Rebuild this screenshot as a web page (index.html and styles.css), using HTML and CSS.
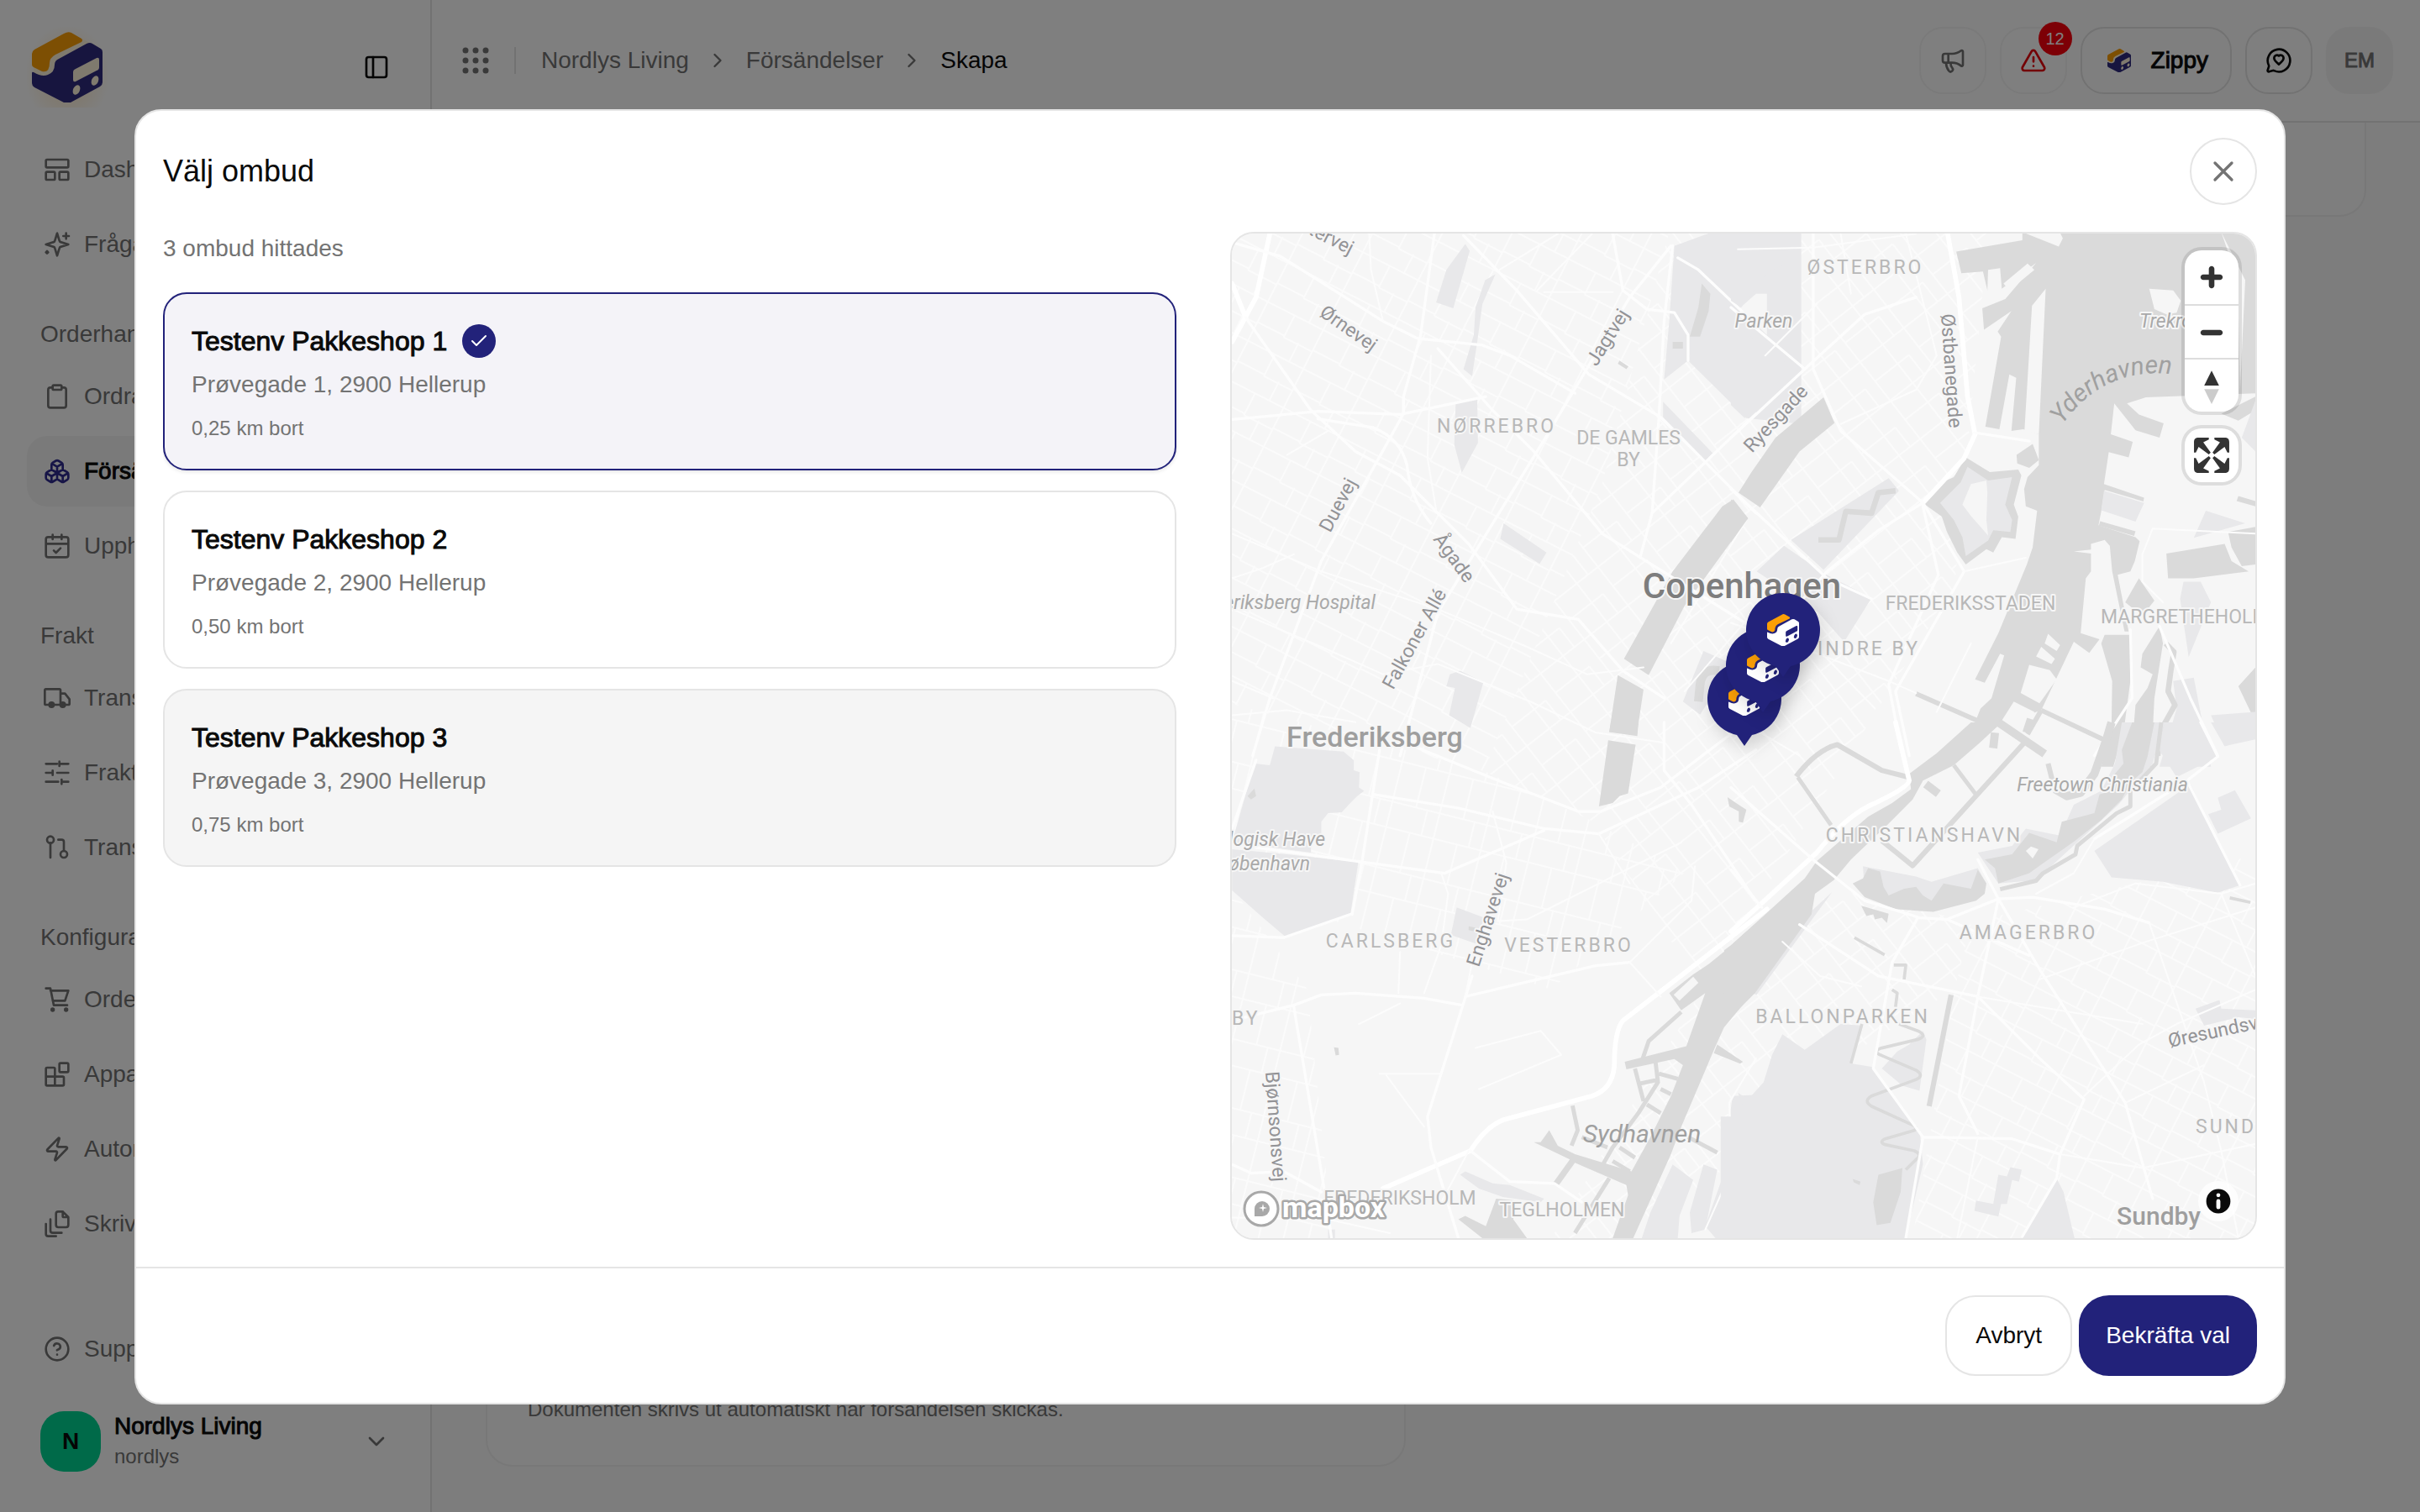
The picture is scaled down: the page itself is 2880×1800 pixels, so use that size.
FILE: index.html
```html
<!DOCTYPE html>
<html lang="sv">
<head>
<meta charset="utf-8">
<meta name="viewport" content="width=device-width, initial-scale=1">
<title>Skapa försändelse – Nordlys Living</title>
<link rel="stylesheet" href="styles.css">
</head>
<body>
<svg class="defs" aria-hidden="true">
  <symbol id="cube" viewBox="0 0 84 84">
    <path class="cube-gap" d="M2 22 40 2q4-2 8 0L82 20v44L46 82q-4 2-8 0L2 64z"/>
    <path class="cube-top" d="M0 26q0-3 3-5L38 2q5-3 9-1l12 7q2 2 0 4L28 27q-7 4-7 10 0 12-9 10L2 42q-2-1-2-3z"/>
    <path class="cube-body" d="M0 49q0-2 2-1 10 6 17 3 8-3 8-12 0-5 5-7L65 14q4-2 7 0l10 6q2 1 2 4v36q0 3-3 5L46 84q-4 2-8 0L3 66q-3-2-3-5z"/>
    <path class="cube-gap" d="M49 48q0-3 3-4l25-13q3-1 3 2v9q0 3-3 4L52 59q-3 1-3-2z"/>
    <ellipse class="cube-gap" cx="53" cy="69" rx="4" ry="6" transform="rotate(25 53 69)"/>
    <ellipse class="cube-gap" cx="75" cy="58" rx="4" ry="6" transform="rotate(25 75 58)"/>
  </symbol>
  <symbol id="chevron" viewBox="0 0 24 24"><path d="m9 18 6-6-6-6"/></symbol>
</svg>

<div class="app">
  <aside class="sidebar">
    <div class="brand">
      <a class="brand-mark" href="#" aria-label="Start"><svg class="cube"><use href="#cube"/></svg></a>
      <button class="plain" type="button" aria-label="Fäll ihop menyn">
        <svg class="icon" viewBox="0 0 24 24"><rect x="3" y="3" width="18" height="18" rx="2"/><path d="M9 3v18"/></svg>
      </button>
    </div>
    <nav class="nav">
      <ul class="nav-list">
        <li><a class="nav-item" href="#"><svg class="icon" viewBox="0 0 24 24"><rect x="2" y="3" width="20" height="7" rx="1"/><rect x="2" y="14" width="8" height="7" rx="1"/><rect x="14" y="14" width="8" height="7" rx="1"/></svg>Dashboard</a></li>
        <li><a class="nav-item" href="#"><svg class="icon" viewBox="0 0 24 24"><path d="m12 2-2 6.500a2 2 0 0 1-1.500 1.500L2 12l6.500 2a2 2 0 0 1 1.500 1.500L12 22l2-6.500a2 2 0 0 1 1.500-1.500L22 12l-6.500-2a2 2 0 0 1-1.500-1.500zM20 2v5M22.500 4.500h-5M3 18l1 1-1 1-1-1z"/></svg>Fråga Zippy</a></li>
      </ul>
      <h2 class="nav-label">Orderhantering</h2>
      <ul class="nav-list">
        <li><a class="nav-item" href="#"><svg class="icon" viewBox="0 0 24 24"><rect x="8" y="2" width="8" height="4" rx="1"/><path d="M16 4h2a2 2 0 0 1 2 2v14a2 2 0 0 1-2 2H6a2 2 0 0 1-2-2V6a2 2 0 0 1 2-2h2"/></svg>Ordrar</a></li>
        <li><a class="nav-item active" href="#"><svg class="icon" viewBox="0 0 24 24"><path d="M2.970 12.920A2 2 0 0 0 2 14.630v3.240a2 2 0 0 0 .97 1.710l3 1.800a2 2 0 0 0 2.060 0L12 19v-5.500l-5-3zM7 16.500l-4.740-2.850M7 16.500l5-3M7 16.500v5.170M12 13.500V19l3.970 2.380a2 2 0 0 0 2.060 0l3-1.800a2 2 0 0 0 .97-1.710v-3.240a2 2 0 0 0-.97-1.710L17 10.500zM17 16.500l-5-3M17 16.500l4.740-2.850M17 16.500v5.170M7.970 4.420A2 2 0 0 0 7 6.130v4.370l5 3 5-3V6.130a2 2 0 0 0-.97-1.710l-3-1.800a2 2 0 0 0-2.060 0zM12 8 7.260 5.150M12 8l4.740-2.850M12 13.500V8"/></svg>Försändelser</a></li>
        <li><a class="nav-item" href="#"><svg class="icon" viewBox="0 0 24 24"><path d="M8 2v4M16 2v4M3 10h18M9 16l2 2 4-4"/><rect x="2" y="4" width="20" height="18" rx="2"/></svg>Upphämtningar</a></li>
      </ul>
      <h2 class="nav-label">Frakt</h2>
      <ul class="nav-list">
        <li><a class="nav-item" href="#"><svg class="icon" viewBox="0 0 24 24"><path d="M15 18V5a1 1 0 0 0-1-1H2a1 1 0 0 0-1 1v12a1 1 0 0 0 1 1h2M9 18h6M19 18h3a1 1 0 0 0 1-1v-4l-4-5h-4"/><circle class="solid" cx="7" cy="18" r="2"/><circle class="solid" cx="17" cy="18" r="2"/></svg>Transportörer</a></li>
        <li><a class="nav-item" href="#"><svg class="icon" viewBox="0 0 24 24"><path d="M2 4h10M14 4h8M14 2v4M2 12h6M12 12h10M8 10v4M2 20h11M16 20h6M16 18v4"/></svg>Fraktregler</a></li>
        <li><a class="nav-item" href="#"><svg class="icon" viewBox="0 0 24 24"><circle cx="6" cy="5" r="3"/><circle cx="18" cy="18" r="3"/><path d="M6 8v13M13 5h3a2 2 0 0 1 2 2v8"/></svg>Transportavtal</a></li>
      </ul>
      <h2 class="nav-label">Konfiguration</h2>
      <ul class="nav-list">
        <li><a class="nav-item" href="#"><svg class="icon" viewBox="0 0 24 24"><path d="M2 2h4l3 15h12M6 4h16l-3 9H8"/><circle class="solid" cx="8" cy="21" r="1"/><circle class="solid" cx="20" cy="21" r="1"/></svg>Orderkällor</a></li>
        <li><a class="nav-item" href="#"><svg class="icon" viewBox="0 0 24 24"><rect x="14" y="2" width="8" height="8" rx="1"/><path d="M10 22V7a1 1 0 0 0-1-1H3a1 1 0 0 0-1 1v14a1 1 0 0 0 1 1h14a1 1 0 0 0 1-1v-6a1 1 0 0 0-1-1H2"/></svg>Appar</a></li>
        <li><a class="nav-item" href="#"><svg class="icon" viewBox="0 0 24 24"><path d="M4 14a1 1 0 0 1-.78-1.630l9.900-10.200a.5.5 0 0 1 .86.460l-1.920 6.020A1 1 0 0 0 13 10h7a1 1 0 0 1 .78 1.630l-9.900 10.200a.5.5 0 0 1-.86-.460l1.920-6.020A1 1 0 0 0 11 14z"/></svg>Automation</a></li>
        <li><a class="nav-item" href="#"><svg class="icon" viewBox="0 0 24 24"><path d="M17 1h-4a2 2 0 0 0-2 2v10a2 2 0 0 0 2 2h7a2 2 0 0 0 2-2V6zM17 1v4a1 1 0 0 0 1 1h4M6 8v10a2 2 0 0 0 2 2h8M2 12v9a2 2 0 0 0 2 2h7"/></svg>Skrivare</a></li>
      </ul>
    </nav>
    <div class="sidebar-foot">
      <a class="nav-item" href="#"><svg class="icon" viewBox="0 0 24 24"><circle cx="12" cy="12" r="10"/><path d="M9.100 9a3 3 0 0 1 5.800 1c0 2-3 3-3 3M12 17h.01"/></svg>Support</a>
      <button class="account plain" type="button">
        <span class="avatar">N</span>
        <span class="account-text"><span class="account-name">Nordlys Living</span><span class="account-slug">nordlys</span></span>
        <svg class="icon" viewBox="0 0 24 24"><path d="m6 9 6 6 6-6"/></svg>
      </button>
    </div>
  </aside>

  <div class="page">
    <header class="topbar">
      <button class="plain apps" type="button" aria-label="Appväljare">
        <svg class="dots" viewBox="0 0 36 36"><circle cx="6" cy="6" r="3.500"/><circle cx="18" cy="6" r="3.500"/><circle cx="30" cy="6" r="3.500"/><circle cx="6" cy="18" r="3.500"/><circle cx="18" cy="18" r="3.500"/><circle cx="30" cy="18" r="3.500"/><circle cx="6" cy="30" r="3.500"/><circle cx="18" cy="30" r="3.500"/><circle cx="30" cy="30" r="3.500"/></svg>
      </button>
      <nav class="crumbs" aria-label="Brödsmulor">
        <a href="#">Nordlys Living</a>
        <svg class="sep"><use href="#chevron"/></svg>
        <a href="#">Försändelser</a>
        <svg class="sep"><use href="#chevron"/></svg>
        <span class="current">Skapa</span>
      </nav>
      <div class="actions">
        <button class="tool faint" type="button" aria-label="Nyheter"><svg class="icon" viewBox="0 0 24 24"><path d="M11 6a13 13 0 0 0 8.400-2.800A1 1 0 0 1 21 4v12a1 1 0 0 1-1.600.8A13 13 0 0 0 11 14H5a2 2 0 0 1-2-2V8a2 2 0 0 1 2-2zM6 14a12 12 0 0 0 2.400 7.200 2 2 0 0 0 3.200-2.400A8 8 0 0 1 10 14M8 6v8"/></svg></button>
        <button class="tool faint alert" type="button" aria-label="12 varningar"><svg class="icon" viewBox="0 0 24 24"><path d="m21.700 18-8-14a2 2 0 0 0-3.500 0l-8 14A2 2 0 0 0 4 21h16a2 2 0 0 0 1.700-3M12 9v4M12 17h.01"/></svg><span class="badge">12</span></button>
        <button class="tool wide" type="button"><svg class="cube small"><use href="#cube"/></svg>Zippy</button>
        <button class="tool" type="button" aria-label="Feedback"><svg class="icon" viewBox="0 0 24 24"><path d="M3 16.300A2 2 0 0 1 3.100 17.400L2 20.800a1 1 0 0 0 1.200 1.200l3.500-1a2 2 0 0 1 1.100.1A10 10 0 1 0 3 16.300zM7.800 9.900a2.500 2.500 0 0 1 4.200-2 2.500 2.500 0 0 1 4.200 2c0 2.500-2.500 3.600-4.200 5.600-1.700-2-4.200-3.100-4.200-5.600z"/></svg></button>
        <button class="tool user" type="button">EM</button>
      </div>
    </header>
    <main class="content">
      <section class="sheet"><p>Dokumenten skrivs ut automatiskt när försändelsen skickas.</p></section>
      <section class="sheet short"></section>
    </main>
  </div>
</div>

<div class="overlay">
  <section class="dialog" role="dialog" aria-modal="true" aria-labelledby="dialog-title">
    <header class="dialog-head">
      <h1 id="dialog-title">Välj ombud</h1>
      <button class="close" type="button" aria-label="Stäng"><svg class="icon" viewBox="0 0 24 24"><path d="M18 6 6 18M6 6l12 12"/></svg></button>
    </header>
    <div class="dialog-body">
      <div class="results">
        <p class="count">3 ombud hittades</p>
        <div class="shops">
          <button class="shop selected" type="button" aria-pressed="true">
            <span class="shop-name">Testenv Pakkeshop 1<span class="tick"><svg viewBox="0 0 24 24"><path d="M20 6 9 17l-5-5"/></svg></span></span>
            <span class="shop-address">Prøvegade 1, 2900 Hellerup</span>
            <span class="shop-distance">0,25 km bort</span>
          </button>
          <button class="shop" type="button" aria-pressed="false">
            <span class="shop-name">Testenv Pakkeshop 2</span>
            <span class="shop-address">Prøvegade 2, 2900 Hellerup</span>
            <span class="shop-distance">0,50 km bort</span>
          </button>
          <button class="shop hovered" type="button" aria-pressed="false">
            <span class="shop-name">Testenv Pakkeshop 3</span>
            <span class="shop-address">Prøvegade 3, 2900 Hellerup</span>
            <span class="shop-distance">0,75 km bort</span>
          </button>
        </div>
      </div>

      <div class="map">
        <svg class="map-canvas" viewBox="0 0 1218 1196" preserveAspectRatio="xMidYMid slice" role="img" aria-label="Karta över Köpenhamn">
          <defs>
            <pattern id="streets-a" width="74" height="52" patternUnits="userSpaceOnUse" patternTransform="rotate(27)"><path d="M0 1h74M1 0v52M37 0v30M0 28h37M56 28v24M37 30h37"/></pattern>
            <pattern id="streets-b" width="66" height="58" patternUnits="userSpaceOnUse" patternTransform="rotate(-38)"><path d="M0 1h66M1 0v58M33 0v58M33 30h33M18 30v28M0 30h18"/></pattern>
            <pattern id="streets-c" width="58" height="80" patternUnits="userSpaceOnUse" patternTransform="rotate(14)"><path d="M0 1h58M1 0v80M30 1v50M1 50h57M44 50v30"/></pattern>
          </defs>
          <rect class="land" width="1218" height="1196"/>
          <g class="streets">
            <path fill="url(#streets-a)" d="M0 0H520L440 300 300 640 0 560z"/>
            <path fill="url(#streets-b)" d="M520 0H900L860 420 560 900 430 700 300 640 440 300z"/>
            <path fill="url(#streets-c)" d="M0 560 300 640 430 700 540 760 380 900 0 780z"/>
            <path fill="url(#streets-c)" d="M0 780 90 900 120 1196H0z"/>
            <path fill="url(#streets-a)" d="M880 820 1218 740V1196H810L860 900z"/>
            <path fill="url(#streets-b)" d="M560 900 720 780 880 820 860 900 700 1000 500 1196H380z"/>
          </g>

          <!-- north-west -->
          <g transform="translate(-16 -18) scale(.408)">
            <path class="park" d="M720 75 733 95 685 262 635 245 665 150zM778 180 808 163 770 250 755 360 740 460 715 440 745 340 750 260zM692 540 755 528 757 655 710 742 688 660zM832 890 957 975 937 1008 822 935zM705 1320 773 1353 735 1487 673 1450 690 1370 665 1365 675 1330zM1330 80 1440 40H1700V600L1540 583 1370 415 1300 470 1315 300zM1297 535 1442 685 1422 707 1297 580zM1415 1262 1500 1300 1405 1448 1355 1410z"/>
            <path class="land" d="M1568 220 1520 262 1600 340 1600 220z"/>
            <path class="water" d="M1410 190 1435 220 1430 270 1405 345 1375 345 1400 260zM1325 360h30v20h-30zM1170 415 1196 432 1190 440 1165 424zM1502 820 1545 875 1360 1130 1255 1333 1183 1285 1325 1030 1470 840zM1165 1333 1240 1375 1220 1508 1140 1498z"/>
            <path class="water-line" stroke-width="26" d="M1460 1320q-50-10-55 40l-5 50"/>
            <path class="road wide" d="M150 45 110 230 40 360M40 190 80 290"/>
            <path class="road" d="M80 290 270 560 400 680 530 750 640 860 730 950 870 1140 1050 1170 1180 1320 1300 1400M40 587 290 563 530 572 780 520M290 585 450 610Q530 640 550 720 560 820 620 890M40 70 180 110 480 300 580 350 770 370 850 400 1040 510M630 45 590 340 540 520V570L300 1000 150 1400 100 1568M715 50 870 210 1080 455 1290 580 1568 860M640 380 800 560 920 680 1120 920 1280 1020 1568 1200M1320 80 1200 230 960 630 640 1150 530 1568M1150 45 1180 210 1250 265 1330 275 1370 340 1370 415M1325 80 1300 300 1285 580 1265 860 1230 990M1568 570 1265 860M1340 115 1400 150 1568 310"/>
            <path class="road thin" d="M40 920 300 1030 640 1140 900 1250 1075 1330 1240 1310M40 1140 300 1250 480 1330 640 1300 910 1410 1100 1500 1300 1530M440 45 445 150 480 300M620 400 610 700 635 850M40 1050 130 1020 220 980M40 1350 160 1400M40 1450 200 1435 400 1470M200 690 320 620M820 150 990 45M930 210 1090 45M950 215H1150M1568 1140 1360 1380M1540 880 1320 1240"/>
          </g>
          <!-- north-east -->
          <g transform="translate(594 -18) scale(.408)">
            <path class="park" d="M0 40H70L158 135 110 155 30 260 0 240zM0 300 170 430 165 460 120 490 40 583 0 545zM460 758 490 795 270 1025 175 938zM155 955 270 1035 410 1108 330 1235 255 1150 75 1030z"/>
            <path class="water" d="M657 97 850 64V40L956 82 968 58 957 36H1540V510L1210 522 1155 540 1190 572 1262 598 1250 640 1180 618 1118 540 1108 630 1172 652 1160 697 1102 682 1088 775 1205 815 1203 826 1090 792 1080 855 1072 895 1180 930 1192 942 1178 1000 1165 1030 1128 1040 1160 1205H1148L1112 1030 1105 955 1090 938 1050 950V966L1000 972 1050 978V1030L1035 1050 1020 1210 1075 1228 1045 1268 1000 1235 905 1435 790 1475 610 1568H600L700 1500 728 1430 760 1400 797 1275 785 1270 740 1355 712 1345 780 1210 863 1010 880 960 893 853 860 840 855 790 865 755 898 720V630L852 615 818 620 832 465 812 455 783 615 742 608 788 345 778 330 818 270 738 325 733 262 800 235 890 130 790 205 785 145 750 150 748 210 735 155 672 160z"/>
            <path class="land" d="M918 205 898 630 856 620 878 255zM885 150 812 210 795 190 865 132zM1220 205 1290 210 1312 240 1300 275 1270 280 1235 265zM870 1303 930 1318 950 1345 900 1415 845 1385zM825 1410 885 1440 860 1505 790 1465zM925 1212 960 1245 950 1262 915 1240zM905 1250 945 1285 935 1300 890 1278zM1430 40 1500 180 1485 500 1478 180z"/>
            <path class="water" d="M685 697 755 740 838 733 847 750 825 835 838 870 830 935 790 930 765 975 745 965 685 1010 660 975 630 915 615 870 562 832 615 770 650 755zM833 690 880 658 898 705 870 728 835 715zM270 522 302 597 200 680 85 843 22 800 60 740 130 640zM0 820 50 875 0 945zM1270 978 1440 950 1460 1000 1510 1030 1350 1050 1275 1050zM1450 915 1530 900V1010L1490 1015 1460 960zM1190 1050 1235 1115 1200 1160 1150 1120zM1480 1365 1530 1310V1470zM1430 570 1530 520 1530 560 1480 590zM1480 810 1530 825 1530 840 1475 825zM1200 1270 1250 1190 1260 1240 1235 1400 1225 1600H1130L1175 1480 1180 1420 1215 1370 1230 1330 1195 1310zM1090 1215 1165 1215V1350L1145 1500 1115 1600H1080L1110 1480 1112 1350 1080 1240z"/>
            <path class="park" d="M690 725 750 765 820 755 800 835 820 880 815 915 765 910 750 940 685 985 675 930 650 880 610 830 670 770zM1088 795 1205 830 1180 885 1080 852zM1385 853 1500 890 1350 932zM1290 1350 1350 1340 1400 1600H1250L1300 1430zM1320 1060H1370L1400 1120 1335 1280 1310 1110zM1490 640 1530 530V680zM1400 1450 1530 1440V1520L1440 1540z"/>
            <path class="land" d="M700 775 745 765 748 800 745 880 750 925 700 868 675 835z"/>
            <path class="water-line" stroke-width="16" d="M255 938H315L335 855 410 860 430 800 480 795M1268 1240 1292 1265 1283 1320 1275 1380 1295 1420 1250 1500 1245 1568M1165 1240"/>
            <path class="water-line" stroke-width="14" d="M540 1387 730 1470M905 1435 1085 1520M905 1435 865 1505M1075 890 1178 920"/>
            <path class="road wide" d="M632 45 665 230 690 520 712 630 680 700 560 830"/>
            <path class="road" d="M560 830 430 910 280 1030 0 1350M240 45V440L320 620 560 830 680 1030M0 260 210 435M0 640 215 440 390 280 540 230M0 790 280 1050 410 1110M560 840 605 1040 460 1360 500 1568M680 1030 480 1380 520 1568M710 625 870 650M1165 1200 1170 1400 1060 1568M1250 1190 1340 1400 1420 1568"/>
            <path class="road thin" d="M320 600 540 500 600 400M0 1180 200 1250 460 1350 540 1385M1530 920 1230 905 1200 980V1060L1260 1120M320 45 350 220M510 45 600 400M20 90 240 85 540 45M100 400 250 250M680 1030 860 990M180 1180 420 1430M0 1450 200 1568M700 1240 600 1440"/>
          </g>
          <!-- south-west -->
          <g transform="translate(-16 582) scale(.408)">
            <path class="park" d="M165 70 365 85 395 110V140L412 145 410 190 425 200 405 215 380 240 360 262 320 265 300 290V330L270 335V380L40 350 105 120 150 125zM40 370 200 385 408 408 385 560 195 625 130 570 40 490zM695 540 775 570 750 645 678 620zM1500 1090 1600 1085V1505H1450L1420 1470 1480 1300 1500 1310 1490 1160zM1325 1290 1385 1335 1345 1440 1340 1505H1235L1260 1430zM1415 1290 1455 1305 1420 1480 1380 1490 1375 1430zM705 1320 720 1310 800 1345 850 1350 950 1390 940 1400 830 1385 760 1360zM320 1480h20v25h-20z"/>
            <path class="water" d="M85 215 105 193 110 215 95 225zM337 948 350 950 352 970 342 972zM730 595 755 600 750 610 730 606zM1145 0H1225L1222 40 1140 28zM1137 52 1217 65 1195 207 1170 215 1150 235 1110 245zM1485 218 1510 235 1540 255 1530 292 1518 290V260L1490 245zM1600 575 1540 610 1480 665 1430 705 1385 735 1315 790 1350 840 1420 790 1365 945 1185 990 1190 1012 1330 982 1355 1000 1320 1090 1260 1210 1205 1310 1040 1260 990 1235 965 1190 940 1225 920 1225 1025 1275 975 1345 990 1355 1040 1285 1190 1350 1195 1380 1150 1505H1210L1320 1260 1350 1180 1450 945 1475 890 1600 740zM700 1450 720 1440 780 1470 810 1390 870 1395 860 1450 900 1505H770zM1455 940 1530 990 1522 996 1445 965z"/>
            <path class="land" d="M1328 795 1385 742 1400 760 1345 812z"/>
            <path class="water-line" stroke-width="12" d="M1350 845 1255 930 1238 980M1033 1118 1048 1190 1030 1235M1215 1010 1240 1105M1275 990 1282 1050 1225 1140 1150 1240 1110 1310M1225 1055 1285 1042M1290 1070 1320 1085M1250 1115 1290 1140M1170 1240 1215 1270M1150 1280 1200 1310M1140 1330 1040 1490M1370 1210 1455 1255M1060 1210 1135 1240M1285 1025 1340 1040"/>
            <path class="road wide" d="M1600 545 1180 870Q1155 900 1155 1000 1150 1070 1090 1090L830 1160Q780 1180 735 1250L480 1360"/>
            <path class="road" d="M470 80 420 400 390 560M570 70 830 175 1050 260 1115 260 1290 190 1460 60 1568 -20M450 210 700 250 950 310 1110 325 1400 190 1568 80M110 365 660 440 950 315M720 800 1100 710 1200 700M40 622 190 628 385 560M40 870 220 825 300 795 400 790 600 805 710 825M740 740 610 1150 620 1240 700 1505M220 830 310 1370 330 1505M1300 0V140L1380 240 1560 510M110 110 40 310M735 1250 850 1340 980 1345 1060 1400M40 1290 95 1315 190 1310 300 1370"/>
            <path class="road thin" d="M650 440 670 500 650 650 600 790M800 260 840 410 815 580 900 575 1050 500 1350 350M1200 700 1380 520 1390 420M1110 325 1200 470M1200 700 1290 800M40 1445 320 1450 500 1490M1568 980 1490 1110 1500 1300 1420 1480M720 800 740 700M530 670 525 790M410 880 530 820M750 950 940 900 1000 970 760 1070M470 1025H650M490 1030 600 1180M730 1250 650 1400"/>
          </g>
          <!-- south-east -->
          <g transform="translate(594 582) scale(.408)">
            <path class="park" d="M150 910 215 955 320 880 385 885 350 995 410 1005 490 1110 550 1190 560 1290 508 1510H-30V1150H48L20 1080 50 1100 95 1050 120 970zM485 960 520 940 560 900 570 925 550 1075 500 1060 440 1010zM295 495 75 795 60 790 235 550zM1060 375 1340 180 1485 475 1420 497 1260 465 1110 452zM1265 0H1370L1420 100 1300 160 1245 75zM1420 220 1470 198 1517 280 1420 325 1392 268 1430 255zM1400 0H1530V40L1440 70zM850 1505 950 1330 970 1370 1002 1505zM780 1320 805 1325 815 1298 848 1305 840 1340 820 1335 805 1405 788 1405 780 1442 710 1425 715 1395 765 1405zM1355 835 1425 810 1430 835 1530 840V865L1480 860 1380 885zM385 420 540 450 585 465 720 425 745 470 600 540 390 500zM720 380 820 360 860 310 960 330 1000 240 1080 200 1120 120 1140 0H1265L1230 120 1130 240 890 460 780 470z"/>
            <path class="water" d="M-20 665 0 650 100 560 215 455 250 405 400 275 470 235 525 195 520 150 600 90 700 0H790L725 60 650 125 560 170 530 225 455 300 350 400 300 460 245 500 235 560 70 790 -20 880zM355 470 385 455 400 425 435 435 445 480 460 505 505 485 540 480 560 505 585 520 620 470 700 485 720 430 745 470 740 500 715 520 590 553 480 545 390 510zM740 400 820 385 870 322 950 350 965 290 1060 265 1075 210 1110 200 1120 150 1145 120 1140 80 1170 0H1235L1215 100 1200 145 1165 175 1140 225 1080 285 1000 348 905 415 870 440 780 470 770 425z"/>
            <path class="land" d="M860 375 875 362 897 370 880 397z"/>
            <path class="water" d="M430 1320 500 1300 495 1370 465 1460 425 1467 415 1400zM355 1332 378 1340 375 1350 358 1342zM380 535 460 558 455 585 440 570 420 575 415 560 395 565z"/>
            <path class="water-line" stroke-width="12" d="M785 487 890 462 910 440 1005 385 1010 360 1125 265 1165 245V200L1240 120 1255 0M195 160 292 300M650 125 718 215"/>
            <path class="water-line" stroke-width="15" d="M190 158Q250 80 310 65L440 140 518 160M855 60 530 418 440 345M925 120 940 180"/>
            <path class="water-line" stroke-width="24" d="M780 0 915 92M875 -10 862 30M945 195 980 215 1020 205 1060 150 1095 50 1110 0M568 180 605 208M770 30 765 75"/>
            <path class="water-line round" stroke-width="9" d="M490 880 545 900Q575 915 545 925L440 950Q410 960 440 972L540 1015Q565 1030 540 1042L410 1090Q385 1105 410 1120L530 1175Q550 1185 530 1192L450 1215Q430 1225 450 1232L535 1250Q560 1262 540 1275L510 1305M382 880 350 995M475 708H510L505 750M470 780 485 790 480 830M360 628 448 678M1455 512 1515 525"/>
            <path class="water-line" stroke-width="15" d="M642 795 578 1120"/>
            <path class="road wide" d="M480 0 520 170Q520 190 400 245 330 280 250 380L0 610"/>
            <path class="road" d="M0 190 245 405 390 520 550 570 630 575 870 680M0 430 90 540M630 575 780 515 880 510 1090 545 1220 585M720 400 780 515 900 720 1150 1110 1230 1390M780 515 720 800 665 1090 720 1200M545 570 470 700 415 1010 560 1210 510 1505M560 1210 820 1215 960 1260M200 590 430 740 720 800 900 980 1030 1100 960 1260 950 1330 850 1500M1370 0 1420 100 1330 170 1060 340M1330 170 1485 475"/>
            <path class="road thin" d="M1030 1090 1190 940 1300 880 1530 780M900 750 1210 640 1530 540M1220 585 1380 1050 1430 1250 1480 1505M1000 540 1180 470 1430 500 1530 470M1060 340 1000 440 890 500M1430 500 1530 740M720 1210 660 1505M720 800 900 830 1200 880M960 1260 1200 1300 1530 1230M1150 1110 1380 1000M150 640 260 740 380 770"/>
          </g>

          <g class="labels">
            <text class="place area" x="754" y="48">ØSTERBRO</text>
            <text class="place area" x="315" y="237">NØRREBRO</text>
            <text class="place" x="472" y="251">DE GAMLES</text>
            <text class="place" x="472" y="277">BY</text>
            <text class="place" x="879" y="448">FREDERIKSSTADEN</text>
            <text class="place area" x="758" y="502">INDRE BY</text>
            <text class="place start" x="1034" y="464">MARGRETHEHOLM</text>
            <text class="place" x="200" y="1156">FREDERIKSHOLM</text>
            <text class="place" x="393" y="1170">TEGLHOLMEN</text>
            <text class="place area" x="189" y="850">CARLSBERG</text>
            <text class="place area" x="401" y="855">VESTERBRO</text>
            <text class="place area" x="727" y="940">BALLONPARKEN</text>
            <text class="place area" x="948" y="840">AMAGERBRO</text>
            <text class="place area" x="824" y="724">CHRISTIANSHAVN</text>
            <text class="place area start" x="1147" y="1071">SUND</text>
            <text class="place area start" x="0" y="942">BY</text>
            <text class="poi" x="633" y="112">Parken</text>
            <text class="poi start" x="1080" y="112">Trekroner</text>
            <text class="poi" x="1036" y="664">Freetown Christiania</text>
            <text class="poi end" x="171" y="447">Frederiksberg Hospital</text>
            <text class="poi end" x="111" y="729">Zoologisk Have</text>
            <text class="poi end" x="93" y="758">København</text>
            <text class="poi basin" x="488" y="1082">Sydhavnen</text>
            <path id="basin-curve" fill="none" d="M988 228Q1036 160 1116 167"/>
            <text class="poi basin start"><textPath href="#basin-curve">Yderhavnen</textPath></text>
            <text class="street" transform="translate(90 0) rotate(27)">tervej</text>
            <text class="street" transform="translate(103 97) rotate(35)">Ørnevej</text>
            <text class="street" transform="translate(434 159) rotate(-58)">Jagtvej</text>
            <text class="street" transform="translate(117 357) rotate(-62)">Duevej</text>
            <text class="street" transform="translate(239 364) rotate(54)">Ågade</text>
            <text class="street" transform="translate(192 544) rotate(-61)">Falkoner Allé</text>
            <text class="street" transform="translate(619 262) rotate(-47)">Ryesgade</text>
            <text class="street" transform="translate(844 96) rotate(86)">Østbanegade</text>
            <text class="street" transform="translate(294 874) rotate(-72)">Enghavevej</text>
            <text class="street" transform="translate(40 998) rotate(86)">Bjørnsonsvej</text>
            <text class="street" transform="translate(1116 969) rotate(-12)">Øresundsvej</text>
            <text class="town" x="607" y="434">Copenhagen</text>
            <text class="town minor" x="170" y="611">Frederiksberg</text>
            <text class="town minor small" x="1103" y="1180">Sundby</text>
          </g>

          <g class="wordmark">
            <circle cx="35" cy="1161" r="20"/>
            <path d="M27 1170v-9a9 9 0 1 1 9 9z"/>
            <path class="star" d="m37 1155 1 4 4 1-4 1-1 4-1-4-4-1 4-1z"/>
            <text x="60" y="1171">mapbox</text>
          </g>

          <g class="pin" transform="translate(610 554)"><path d="M0 56-9 43A44 44 0 1 1 9 43z"/><use class="cube" href="#cube" x="-19" y="-18" width="38" height="38"/></g>
          <g class="pin" transform="translate(632 514)"><path d="M0 56-9 43A44 44 0 1 1 9 43z"/><use class="cube" href="#cube" x="-19" y="-18" width="38" height="38"/></g>
          <g class="pin" transform="translate(656 472)"><path d="M0 56-9 43A44 44 0 1 1 9 43z"/><use class="cube" href="#cube" x="-19" y="-19" width="38" height="38"/></g>
        </svg>
        <div class="map-controls">
          <div class="control-group">
            <button type="button" aria-label="Zooma in"><svg viewBox="0 0 29 29"><path d="M14.500 8.500c-.75 0-1.500.75-1.500 1.500v3h-3c-.75 0-1.500.75-1.500 1.500S9.250 16 10 16h3v3c0 .75.75 1.500 1.500 1.500S16 19.750 16 19v-3h3c.75 0 1.500-.75 1.500-1.500S19.750 13 19 13h-3v-3c0-.75-.75-1.500-1.500-1.500z"/></svg></button>
            <button type="button" aria-label="Zooma ut"><svg viewBox="0 0 29 29"><path d="M10 13c-.75 0-1.500.75-1.500 1.500S9.250 16 10 16h9c.75 0 1.500-.75 1.500-1.500S19.750 13 19 13z"/></svg></button>
            <button type="button" aria-label="Återställ norr"><svg viewBox="0 0 29 29"><path d="m10.500 14 4-8 4 8z"/><path class="south" d="m10.500 16 4 8 4-8z"/></svg></button>
          </div>
          <div class="control-group">
            <button type="button" aria-label="Helskärm"><svg viewBox="0 0 29 29"><path d="M24 16v5.500c0 1.750-.75 2.500-2.500 2.500H16v-1l3-1.500-4-5.500 1-1 5.500 4 1.500-3zM6 16l1.500 3 5.500-4 1 1-4 5.500 3 1.500v1H7.500C5.750 24 5 23.250 5 21.500V16zm7-11v1l-3 1.500 4 5.500-1 1-5.500-4L6 13H5V7.500C5 5.750 5.750 5 7.500 5zm11 2.500c0-1.750-.75-2.500-2.500-2.500H16v1l3 1.500-4 5.500 1 1 5.500-4 1.500 3h1z"/></svg></button>
          </div>
        </div>
        <button class="map-info" type="button" aria-label="Kartinformation"><svg viewBox="0 0 20 20"><path fill-rule="evenodd" d="M4 10a6 6 0 1 0 12 0 6 6 0 1 0-12 0m5-3a1 1 0 1 0 2 0 1 1 0 1 0-2 0m0 3a1 1 0 1 1 2 0v3a1 1 0 1 1-2 0"/></svg></button>
      </div>
    </div>
    <footer class="dialog-foot">
      <button class="btn" type="button">Avbryt</button>
      <button class="btn primary" type="button">Bekräfta val</button>
    </footer>
  </section>
</div>
</body>
</html>
```
FILE: styles.css
```css
:root {
  --ink: #0a0a0a;
  --muted: #737373;
  --line: #e5e5e5;
  --navy: #22227a;
  --orange: #fb9f06;
}

* { box-sizing: border-box; }

body {
  margin: 0;
  background: #fff;
  color: var(--ink);
  font: 28px/40px "Liberation Sans", Arial, sans-serif;
}

h1, h2, p, ul { margin: 0; padding: 0; font-weight: 400; }
ul { list-style: none; }
a { color: inherit; text-decoration: none; }
button { margin: 0; padding: 0; border: 0; background: none; color: inherit; font: inherit; cursor: pointer; }
svg { display: block; flex: none; }

.defs { position: absolute; width: 0; height: 0; }

.icon {
  width: 32px;
  height: 32px;
  fill: none;
  stroke: currentColor;
  stroke-width: 2;
  stroke-linecap: round;
  stroke-linejoin: round;
}
.icon .solid { fill: currentColor; }

.cube { --top: var(--orange); --body: #2e2a7f; --gap: #fff4dc; width: 84px; height: 84px; }
.cube.small { width: 28px; height: 28px; }
.cube-top { fill: var(--top); }
.cube-body { fill: var(--body); }
.cube-gap { fill: var(--gap); }

/* Application shell */
.app { display: flex; height: 100vh; overflow: hidden; }

.sidebar {
  display: flex;
  flex-direction: column;
  flex: none;
  width: 514px;
  padding: 32px 48px 48px 32px;
  border-right: 2px solid var(--line);
}
.brand { display: flex; align-items: center; justify-content: space-between; margin-bottom: 32px; }
.brand-mark {
  padding: 6px;
  border-radius: 12px;
  background: radial-gradient(ellipse at 50% 60%, #fff0d8 30%, #fff 75%);
}
.nav-list { display: grid; gap: 5px; }
.nav-item {
  display: flex;
  align-items: center;
  gap: 16px;
  height: 84px;
  padding-left: 20px;
  border-radius: 24px;
  color: var(--muted);
  white-space: nowrap;
}
.nav-item.active { background: #f5f5f5; color: var(--ink); -webkit-text-stroke: 1px; }
.nav-item.active .icon { color: #2e2a8f; }
.nav-label { margin-top: 32px; padding-left: 16px; font-size: 28px; line-height: 65px; color: var(--muted); }

.sidebar-foot { display: grid; gap: 32px; margin-top: auto; }
.account { display: flex; align-items: center; gap: 16px; padding-left: 16px; text-align: left; line-height: 36px; }
.avatar {
  display: grid;
  place-items: center;
  width: 72px;
  height: 72px;
  border-radius: 28px;
  background: #00d492;
  font-weight: 700;
}
.account-text { display: grid; flex: 1; }
.account-name { -webkit-text-stroke: 1px; }
.account-slug { font-size: 24px; color: var(--muted); }
.account .icon { color: var(--muted); }

.page { display: flex; flex: 1; flex-direction: column; min-width: 0; }
.topbar {
  display: flex;
  align-items: center;
  gap: 28px;
  height: 146px;
  padding: 0 32px 0 34px;
  border-bottom: 2px solid var(--line);
  color: var(--muted);
}
.dots { width: 36px; height: 36px; fill: currentColor; }
.crumbs { position: relative; display: flex; align-items: center; gap: 20px; padding-left: 32px; }
.crumbs::before { content: ""; position: absolute; left: 0; width: 2px; height: 32px; background: var(--line); }
.crumbs .current { color: var(--ink); }
.sep { width: 28px; height: 28px; fill: none; stroke: currentColor; stroke-width: 2; stroke-linecap: round; stroke-linejoin: round; }
.actions { display: flex; gap: 16px; margin-left: auto; }
.tool {
  position: relative;
  display: flex;
  align-items: center;
  justify-content: center;
  min-width: 80px;
  height: 80px;
  border: 2px solid var(--line);
  border-radius: 28px;
  color: var(--ink);
}
.tool.faint { border-color: #f5f5f5; color: var(--muted); }
.tool.alert { color: #e7000b; }
.tool.wide { gap: 24px; padding: 0 26px 0 30px; -webkit-text-stroke: 1px; }
.tool.user { border-color: #f5f5f5; background: #f5f5f5; color: var(--muted); font-size: 24px; -webkit-text-stroke: 1px; }
.badge {
  position: absolute;
  top: -8px;
  right: -8px;
  display: grid;
  place-items: center;
  width: 40px;
  height: 40px;
  border-radius: 50%;
  background: #fb000c;
  color: #fff;
  font-size: 20px;
  line-height: 24px;
}

.content {
  display: grid;
  grid-template-columns: 1fr 1fr;
  align-items: start;
  gap: 48px;
  flex: 1;
  padding: 0 64px;
  background: #fafafa;
}
.sheet {
  display: flex;
  align-items: flex-end;
  height: calc(100% - 54px);
  padding: 48px;
  border: 2px solid #f0f0f0;
  border-top: 0;
  border-radius: 0 0 32px 32px;
  background: #fcfcfc;
  color: var(--muted);
  font-size: 24px;
  line-height: 36px;
}
.sheet.short { height: 112px; }

/* Dialog */
.overlay {
  position: fixed;
  inset: 0;
  display: flex;
  padding: 130px 160px 128px;
  background: rgba(0, 0, 0, .5);
}
.dialog {
  display: flex;
  flex: 1;
  flex-direction: column;
  min-width: 0;
  border: 2px solid var(--line);
  border-radius: 32px;
  background: #fff;
}
.dialog-head { display: flex; align-items: center; justify-content: space-between; padding: 32px 32px 0; }
.dialog-head h1 { font-size: 36px; line-height: 48px; }
.close {
  display: grid;
  place-items: center;
  width: 80px;
  height: 80px;
  border: 2px solid var(--line);
  border-radius: 50%;
  color: var(--muted);
}
.close .icon { width: 40px; height: 40px; }

.dialog-body { display: grid; grid-template-columns: 1fr 1fr; gap: 48px; flex: 1; min-height: 0; padding: 32px; }
.results { padding-right: 16px; overflow: hidden; }
.count { margin-bottom: 32px; color: var(--muted); }
.shops { display: grid; gap: 24px; }
.shop {
  display: flex;
  flex-direction: column;
  padding: 32px;
  border: 2px solid var(--line);
  border-radius: 28px;
  background: #fff;
  text-align: left;
}
.shop.selected { border-color: var(--navy); background: #f4f3f8; box-shadow: 0 2px 4px rgba(0, 0, 0, .1); }
.shop.hovered { background: #f5f5f5; }
.shop-name { display: flex; align-items: center; gap: 18px; font-size: 32px; line-height: 48px; -webkit-text-stroke: 1px; }
.tick { display: grid; place-items: center; width: 40px; height: 40px; border-radius: 50%; background: var(--navy); }
.tick svg { width: 24px; height: 24px; fill: none; stroke: #fff; stroke-width: 2; stroke-linecap: round; stroke-linejoin: round; }
.shop-address { margin: 8px 0 16px; color: var(--muted); }
.shop-distance { color: var(--muted); font-size: 24px; line-height: 32px; }

.dialog-foot { display: flex; justify-content: flex-end; gap: 8px; padding: 32px; border-top: 2px solid var(--line); }
.btn { height: 96px; padding: 0 34px; border: 2px solid var(--line); border-radius: 36px; background: #fff; }
.btn.primary { padding: 0 30px; border-color: var(--navy); background: var(--navy); color: #fff; }

/* Map */
.map { position: relative; overflow: hidden; border: 2px solid var(--line); border-radius: 28px; background: #f6f6f6; }
.map-canvas { width: 100%; height: 100%; }
.land { fill: #f6f6f6; }
.park { fill: #e8e8ea; }
.water { fill: #dadada; }
.water-line { fill: none; stroke: #dadada; stroke-linejoin: round; }
.streets, pattern path { fill: none; stroke: #fbfbfb; stroke-width: 2; }
.streets { stroke: none; }
.road { fill: none; stroke: #fdfdfd; stroke-width: 8; stroke-linejoin: round; stroke-linecap: round; }
.road.wide { stroke: #fff; stroke-width: 14; }
.road.thin { stroke: #fcfcfc; stroke-width: 5; }

.labels { font-family: Roboto, sans-serif; font-size: 24px; stroke: #f6f6f6; stroke-width: 4px; stroke-linejoin: round; paint-order: stroke; }
.labels path { stroke: none; }
.place { fill: #b8b8b8; text-anchor: middle; font-size: 23px; }
.area { letter-spacing: 3px; }
.poi { fill: #a9a9a9; font-style: italic; font-size: 23px; text-anchor: middle; }
.basin { fill: #a0a0a0; font-size: 30px; stroke: none; }
.street { fill: #939396; font-size: 23px; }
.town { fill: #7d7d7d; font-size: 42px; font-weight: 500; text-anchor: middle; }
.town.minor { fill: #9e9e9e; font-size: 34px; }
.town.small { font-size: 30px; }
.labels .start { text-anchor: start; }
.labels .end { text-anchor: end; }

.wordmark { fill: #a8a8a8; stroke: none; }
.wordmark circle { fill: #fff; stroke: #a8a8a8; stroke-width: 3; }
.wordmark .star { fill: #fff; }
.wordmark text { fill: #fff; stroke: #a8a8a8; stroke-width: 5; stroke-linejoin: round; paint-order: stroke; font: 700 34px Roboto, sans-serif; }

.pin { fill: var(--navy); filter: drop-shadow(4px 8px 10px rgba(0, 0, 0, .15)); }
.pin .cube { --body: #fff; --gap: var(--navy); }

.map-controls { position: absolute; top: 20px; right: 20px; display: grid; gap: 20px; }
.control-group { overflow: hidden; border-radius: 20px; background: #fff; box-shadow: 0 0 0 4px rgba(0, 0, 0, .1); }
.control-group button { display: block; width: 64px; height: 64px; }
.control-group button + button { border-top: 2px solid #ddd; }
.control-group svg { width: 64px; height: 64px; fill: #333; }
.control-group .south { fill: #ccc; }
.map-info { position: absolute; right: 20px; bottom: 20px; border-radius: 24px; background: rgba(255, 255, 255, .8); }
.map-info svg { width: 48px; height: 48px; fill: var(--ink); }
```
